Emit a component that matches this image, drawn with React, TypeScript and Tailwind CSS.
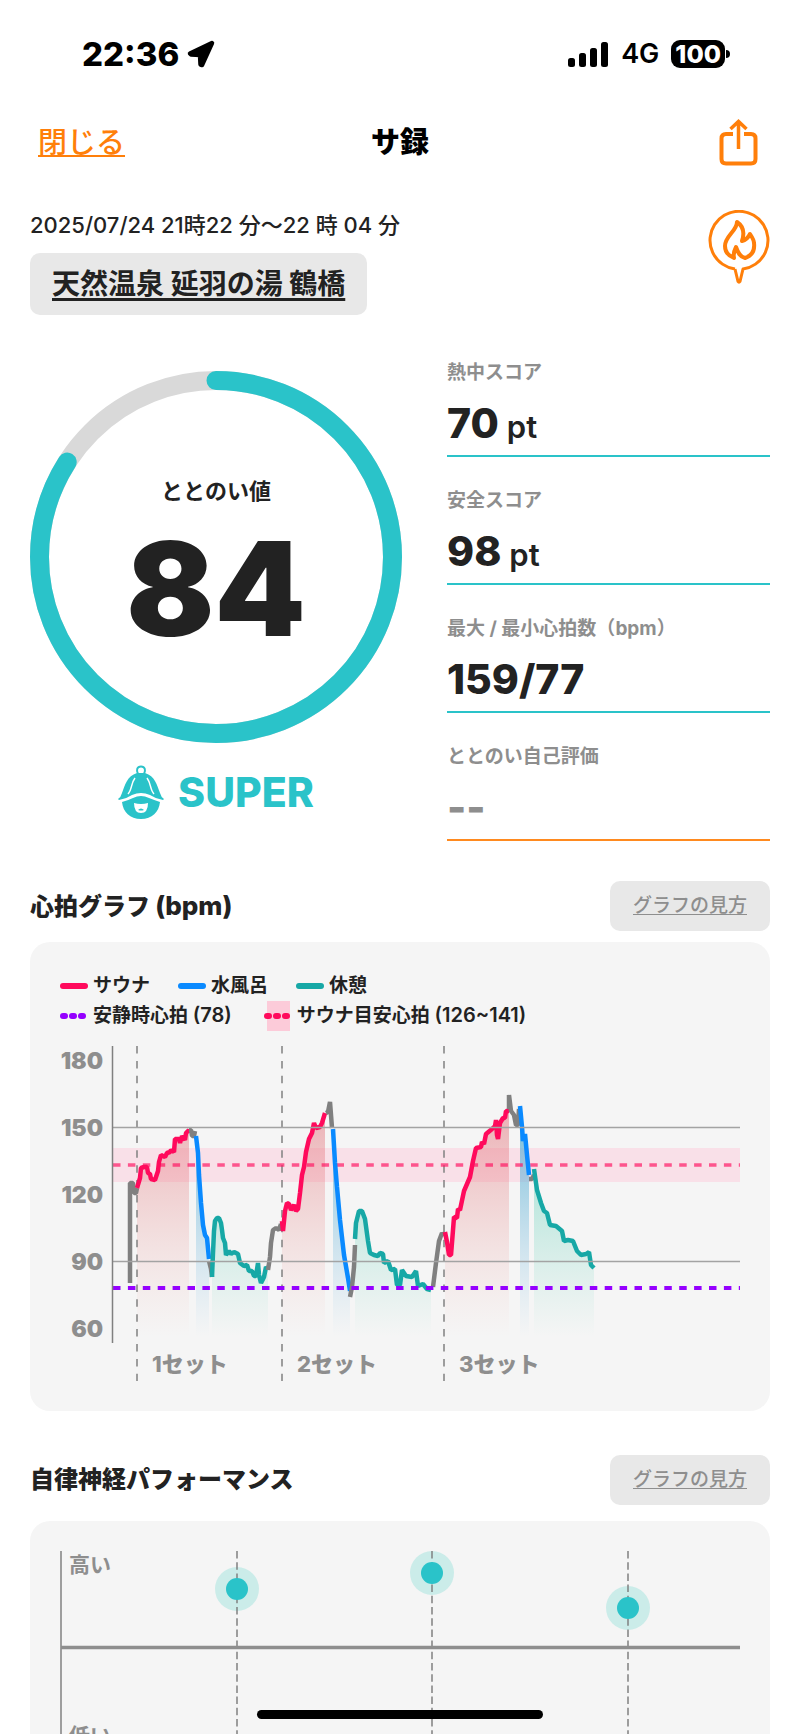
import type { ReactNode } from 'react';

const TEAL = '#2ac3c9';
const ORANGE = '#ff7f0a';
const RED = '#ff0a5c';
const BLUE = '#0a8aff';
const GREEN = '#17a8a6';
const GRAY = '#808080';

type Phase = 'sauna' | 'water' | 'rest' | 'move';

const phaseColor: Record<Phase, string> = { sauna: RED, water: BLUE, rest: GREEN, move: GRAY };

// heart rate trace, one entry per phase, in chart units
const trace: { phase: Phase; points: string }[] = [
    { phase: 'move', points: '70,248 70,148 73,148 74,158 76,158 77,153' },
    { phase: 'sauna', points: '77,153 80,143 81,133 84,132 87,132 88,138 90,139 91,144 95,145 98,136 99,127 101,120 105,122 107,118 110,117 111,115 114,117 115,104 119,104 120,108 122,101 125,105 126,98 129,95 129,98' },
    { phase: 'move', points: '129,95 131,95 132,101 134,101 135,96' },
    { phase: 'water', points: '136,101 138,118 139,140 141,168 143,190 145,200 147,203 149,224' },
    { phase: 'move', points: '149,226 151,234 152,242' },
    { phase: 'rest', points: '152,242 153,218 154,196 155,186 157,183 159,183 161,188 162,195 163,203 165,208 166,220 169,216 171,219 174,217 178,219 180,228 184,231 187,230 189,236 192,236 194,241 196,241 198,228 199,240 201,248 204,242 206,232 208,234' },
    { phase: 'move', points: '208,235 210,222 211,208 213,195 216,193 219,195 221,189' },
    { phase: 'sauna', points: '222,186 223,196 225,176 227,168 229,169 231,175 234,170 236,176 238,174 240,158 242,140 244,132 246,117 249,104 252,98 254,88 256,93 260,92 262,88 265,78' },
    { phase: 'move', points: '266,78 268,77 270,67 271,80 272,93' },
    { phase: 'water', points: '273,94 275,128 277,152 280,185 284,220 288,243 290,256' },
    { phase: 'move', points: '290,262 292,252 294,232 295,210' },
    { phase: 'rest', points: '295,204 296,188 299,176 302,176 305,184 308,206 310,218 314,220 318,221 320,218 323,219 324,228 328,226 331,235 335,234 337,250 340,250 342,235 346,241 352,242 356,236 358,251 363,249 367,254 371,255' },
    { phase: 'move', points: '373,252 376,228 379,206 382,198 384,201' },
    { phase: 'sauna', points: '385,197 387,207 389,220 391,220 393,195 394,182 397,183 398,174 400,175 404,156 410,142 413,126 416,113 421,112 422,107 424,109 426,99 432,94 435,91 436,85 437,100 438,104 440,88 443,83 445,83 446,76 449,76' },
    { phase: 'move', points: '449,74 449,60 451,76 454,80 456,90 458,90 459,74' },
    { phase: 'water', points: '460,71 462,92 463,106 465,99 467,120 469,140' },
    { phase: 'move', points: '469,144 472,144 474,140' },
    { phase: 'rest', points: '474,134 477,155 481,168 484,176 487,178 490,190 496,191 502,196 504,206 508,205 513,206 517,216 521,220 526,219 529,217 531,230 534,233' },
];

const ticks = [
    { label: '180', y: 22 },
    { label: '150', y: 89 },
    { label: '120', y: 156 },
    { label: '90', y: 223 },
    { label: '60', y: 290 },
];

const sets = [
    { label: '1セット', x: 77 },
    { label: '2セット', x: 222 },
    { label: '3セット', x: 384 },
];

const scores = [
    { label: '熱中スコア', value: '70', unit: 'pt', done: true },
    { label: '安全スコア', value: '98', unit: 'pt', done: true },
    { label: '最大 / 最小心拍数（bpm）', value: '159/77', unit: '', done: true },
    { label: 'ととのい自己評価', value: '--', unit: '', done: false },
];

function StatusBar()
{
    return (
        <div className="flex items-center justify-between pt-9 pl-[82px] pr-[70px] h-[72px] text-black">
            <div className="flex items-center gap-2">
                <span className="text-[33px] leading-9 font-extrabold">22:36</span>
                <svg className="w-7 h-7" viewBox="0 0 28 28" aria-hidden="true">
                    <path d="M25 3 L3 13.500 L4 14.500 L13 15 L13.500 24.500 L15 25 Z" stroke="#000" strokeWidth="4.500" strokeLinejoin="round" />
                </svg>
            </div>
            <div className="flex items-center gap-3">
                <svg className="w-[42px] h-7" viewBox="0 0 42 28" aria-hidden="true">
                    <rect x="1" y="18" width="7" height="9" rx="2.500" />
                    <rect x="12" y="13" width="7" height="14" rx="2.500" />
                    <rect x="23" y="8" width="7" height="19" rx="2.500" />
                    <rect x="34" y="2" width="7" height="25" rx="2.500" />
                </svg>
                <span className="text-[27px] leading-9 font-semibold">4G</span>
                <div className="flex items-center gap-px">
                    <span className="px-1 rounded-[9px] bg-black text-white text-[25px] leading-7 font-extrabold">100</span>
                    <span className="w-1 h-2 rounded-r-full bg-black" />
                </div>
            </div>
        </div>
    );
}

function ShareIcon()
{
    return (
        <svg className="w-11 h-12" viewBox="0 0 44 48" fill="none" stroke={ORANGE} strokeWidth="4" aria-hidden="true">
            <path d="M15 15 H8 Q3.500 15 3.500 19.500 V40 Q3.500 44.500 8 44.500 H33 Q37.500 44.500 37.500 40 V19.500 Q37.500 15 33 15 H26" />
            <path d="M20.500 30 V3 M12.500 10 L20.500 2.500 L28.500 10" strokeWidth="3.500" />
        </svg>
    );
}

function FirePin()
{
    return (
        <svg className="w-[62px] h-[74px] mt-px" viewBox="0 0 62 74" fill="none" stroke={ORANGE} strokeWidth="3" strokeLinejoin="round" aria-hidden="true">
            <path d="M27 59 A29 29 0 1 1 35 59 L32 71.500 Q31 73 30 71.500 Z" stroke="none" />
            <path d="M27 59 A29 29 0 1 1 35 59 L32 71.500 Q31 73 30 71.500 L27 59" />
            <path d="M29 12 C29 21 17 26 17 36 C17 42 21 46 26 48 C25 44 26 41 28 37 C30 43 32 47 37 48 C43 46 47 41 46 33 C46 30 44 27 42 24 C40 28 38 30 34 31 C37 22 35 16 29 12 Z" strokeWidth="4" />
        </svg>
    );
}

function SaunaHat()
{
    return (
        <svg className="w-[46px] h-[54px]" viewBox="0 0 46 54" fill={TEAL} aria-hidden="true">
            <path d="M20 9 C18 5 19 1.500 23 1.500 S28 5 26 9" fill="none" stroke={TEAL} strokeWidth="2" />
            <path d="M19 8 H27 C37 11 39 20 42 28 Q43 32 46 34 L45 35 Q38 34 32 30 Q23 26 14 30 Q8 34 1 35 L0 34 Q3 32 4 28 C7 20 9 11 19 8 Z" />
            <path d="M4 37 Q11 35 15 33 Q23 29 31 33 Q36 35 42 37 C41 47 34 54 23 54 S5 47 4 37 Z" />
            <path d="M17 13 C13 18 14 25 10 29 M29 13 C33 18 32 25 36 29" fill="none" stroke="#fff" strokeWidth="1.500" />
            <path d="M16 38 Q23 40 30 38 Q30 48 23 48 T16 38 Z" fill="#fff" />
            <path d="M20 45 Q23 42 26 45 Q23 46 20 45 Z" />
        </svg>
    );
}

function ScoreRing()
{
    const r = 176.5;
    const total = 2 * Math.PI * r;
    return (
        <div className="relative">
            <svg className="block w-full" viewBox="0 0 372 372" fill="none" strokeWidth="19" aria-hidden="true">
                <circle cx="186" cy="186" r={r} stroke="#d9d9d9" />
                <circle cx="186" cy="186" r={r} stroke={TEAL} strokeLinecap="round" strokeDasharray={`${total * 0.84} ${total}`} transform="rotate(-90 186 186)" />
            </svg>
            <div className="absolute inset-0 flex flex-col items-center justify-center pt-8 text-[#222]">
                <p className="text-[22px] leading-8 font-bold">ととのい値</p>
                <p className="text-[130px] leading-[164px] font-black">84</p>
            </div>
        </div>
    );
}

function SectionHeader({ children }: { children: ReactNode })
{
    return (
        <div className="flex items-center justify-between">
            <h2 className="text-2xl font-extrabold">{children}</h2>
            <button type="button" className="h-[50px] w-40 rounded-[10px] bg-[#e8e8e8] text-[#8e8e8e] text-[19px] font-medium underline underline-offset-2 [text-decoration-skip-ink:none]">
                グラフの見方
            </button>
        </div>
    );
}

function LegendLine({ color, children }: { color: string; children: ReactNode })
{
    return (
        <li className="flex items-center gap-[5px]">
            <svg className="w-7 h-[6px]" viewBox="0 0 28 6" aria-hidden="true">
                <rect width="28" height="6" rx="3" fill={color} />
            </svg>
            {children}
        </li>
    );
}

function LegendDots({ color, band, children }: { color: string; band?: boolean; children: ReactNode })
{
    return (
        <li className="flex items-center gap-[5px]">
            <svg className="w-7 h-[30px]" viewBox="0 0 28 30" aria-hidden="true">
                {band && <rect x="3" width="23" height="30" fill="#fccbd9" />}
                <path d="M3 15 h2 M12 15 h2 M21 15 h2" stroke={color} strokeWidth="6" strokeLinecap="round" />
            </svg>
            <span>{children}</span>
        </li>
    );
}

function HeartRateChart()
{
    return (
        <svg className="block w-full" viewBox="0 0 680 342" role="img" aria-label="心拍グラフ">
            <defs>
                <linearGradient id="sauna" gradientUnits="userSpaceOnUse" x1="0" y1="80" x2="0" y2="302">
                    <stop offset="0" stopColor="#e0606a" stopOpacity="0.45" />
                    <stop offset="1" stopColor="#f0a8a0" stopOpacity="0" />
                </linearGradient>
                <linearGradient id="water" gradientUnits="userSpaceOnUse" x1="0" y1="80" x2="0" y2="302">
                    <stop offset="0" stopColor="#4aa9cf" stopOpacity="0.75" />
                    <stop offset="1" stopColor="#8fc6e8" stopOpacity="0" />
                </linearGradient>
                <linearGradient id="rest" gradientUnits="userSpaceOnUse" x1="0" y1="110" x2="0" y2="302">
                    <stop offset="0" stopColor="#7fd8c6" stopOpacity="0.7" />
                    <stop offset="1" stopColor="#a0e0d0" stopOpacity="0" />
                </linearGradient>
            </defs>

            <rect x="53" y="109" width="627" height="34" fill="#f9e0e8" />

            <g transform="translate(0 -4)">
                {trace.filter((t) => t.phase !== 'move').map((t) => {
                    const pts = t.points.split(' ');
                    const first = pts[0].split(',')[0];
                    const last = pts[pts.length - 1].split(',')[0];
                    return <polygon key={t.points} points={`${first},302 ${t.points} ${last},302`} fill={`url(#${t.phase})`} />;
                })}
            </g>

            <g stroke={GRAY} strokeWidth="1.500" strokeDasharray="7.500 7.400">
                {sets.map((s) => <path key={s.x} d={`M${s.x} 7 V342`} />)}
            </g>
            <path d="M53 126 H680" stroke={RED} strokeOpacity="0.65" strokeWidth="3.500" strokeDasharray="7.500 7.400" />

            <g fill="none" strokeWidth="4.500" strokeLinejoin="bevel" transform="translate(0 -4)">
                {trace.map((t) => <polyline key={t.points} points={t.points} stroke={phaseColor[t.phase]} />)}
            </g>

            <path d="M53 88.500 H680 M53 222.500 H680" stroke="#a3a3a3" strokeWidth="1.500" />
            <path d="M53 249 H680" stroke="#9500ff" strokeWidth="4" strokeDasharray="7.500 7.400" />
            <path d="M52.500 7 V304" stroke={GRAY} strokeWidth="1.500" />

            <g className="text-[23px] font-black" fill="#8e8e8e">
                {ticks.map((t) => <text key={t.label} x="43" y={t.y + 8} textAnchor="end">{t.label}</text>)}
            </g>
            <g className="text-[22px] font-extrabold" fill="#8e8e8e">
                {sets.map((s) => <text key={s.label} x={s.x + 15} y="333">{s.label}</text>)}
            </g>
        </svg>
    );
}

function NerveChart()
{
    const dots = [{ x: 177, y: 38 }, { x: 372, y: 22 }, { x: 568, y: 57 }];
    return (
        <svg className="block w-full" viewBox="0 0 680 200" role="img" aria-label="自律神経パフォーマンス">
            {dots.map((d) => <circle key={d.x} cx={d.x} cy={d.y} r="22" fill="#cbece9" />)}
            <g stroke={GRAY} strokeWidth="1.500" strokeDasharray="7.500 3.700">
                {dots.map((d) => <path key={d.x} d={`M${d.x} 0 V200`} />)}
            </g>
            {dots.map((d) => <circle key={d.x} cx={d.x} cy={d.y} r="11" fill={TEAL} />)}
            <path d="M1 0 V200" stroke={GRAY} strokeWidth="1.500" />
            <path d="M1 96.500 H680" stroke="#8e8e8e" strokeWidth="3.500" />
            <g className="text-[21px] font-bold" fill="#8e8e8e">
                <text x="9" y="21">高い</text>
                <text x="9" y="192">低い</text>
            </g>
        </svg>
    );
}

export default function App()
{
    return (
        <div className="relative h-screen overflow-hidden bg-white text-[#222] font-['Inter','Noto_Sans_CJK_JP',sans-serif]">
            <StatusBar />

            <header className="grid grid-cols-3 items-center px-[38px] pt-[47px]">
                <a href="#close" className="justify-self-start text-[29px] leading-[44px] font-medium text-[#ff7f0a] underline underline-offset-2 decoration-2 [text-decoration-skip-ink:none]">閉じる</a>
                <h1 className="text-center text-[29px] leading-[44px] font-extrabold text-black">サ録</h1>
                <button type="button" aria-label="共有" className="justify-self-end">
                    <ShareIcon />
                </button>
            </header>

            <main className="px-[30px]">
                <section className="flex items-start justify-between pt-[42px]">
                    <div>
                        <p className="text-[22px] leading-8 font-medium">2025/07/24 21時22 分～22 時 04 分</p>
                        <a href="#place" className="inline-block mt-3 px-[22px] py-[9px] rounded-[10px] bg-[#e8e8e8] text-[28px] leading-[44px] font-bold underline underline-offset-4 decoration-3 [text-decoration-skip-ink:none]">
                            天然温泉 延羽の湯 鶴橋
                        </a>
                    </div>
                    <FirePin />
                </section>

                <section className="grid grid-cols-[372fr_323fr] gap-x-[45px] pt-10">
                    <div className="pt-4">
                        <ScoreRing />
                        <div className="flex items-center justify-center gap-[14px] mt-[22px]">
                            <SaunaHat />
                            <span className="text-[41px] leading-[54px] font-extrabold text-[#2ac3c9]">SUPER</span>
                        </div>
                    </div>
                    <dl className="flex flex-col gap-[26px]">
                        {scores.map((s) => (
                            <div key={s.label} className={`h-[102px] border-b-2 ${s.done ? 'border-[#2ac3c9]' : 'border-[#ff8a1f]'}`}>
                                <dt className="pt-0.5 text-[19px] leading-8 font-bold text-[#8e8e8e]">{s.label}</dt>
                                <dd className={`flex items-baseline gap-2 mt-2 text-[41px] leading-[52px] font-extrabold ${s.done ? '' : 'text-[#8e8e8e]'}`}>
                                    {s.value}
                                    {s.unit && <span className="text-[31px] font-semibold">{s.unit}</span>}
                                </dd>
                            </div>
                        ))}
                    </dl>
                </section>

                <section className="pt-10">
                    <SectionHeader>心拍グラフ <span className="text-[26px]">(bpm)</span></SectionHeader>
                    <div className="mt-[11px] px-[30px] pt-[29px] pb-[30px] rounded-[20px] bg-[#f5f5f5]">
                        <ul className="flex gap-7 text-[19px] leading-[30px] font-semibold">
                            <LegendLine color={RED}>サウナ</LegendLine>
                            <LegendLine color={BLUE}>水風呂</LegendLine>
                            <LegendLine color={GREEN}>休憩</LegendLine>
                        </ul>
                        <ul className="flex gap-8 text-[19px] leading-[30px] font-semibold">
                            <LegendDots color="#9500ff">安静時心拍 <span className="text-xl leading-none">(78)</span></LegendDots>
                            <LegendDots color={RED} band>サウナ目安心拍 <span className="text-xl leading-none">(126~141)</span></LegendDots>
                        </ul>
                        <div className="mt-2">
                            <HeartRateChart />
                        </div>
                    </div>
                </section>

                <section className="pt-11">
                    <SectionHeader>自律神経パフォーマンス</SectionHeader>
                    <div className="mt-4 px-[30px] py-[30px] rounded-[20px] bg-[#f5f5f5]">
                        <NerveChart />
                    </div>
                </section>
            </main>

            <div className="absolute bottom-[15px] left-1/2 -translate-x-1/2 w-[286px] h-[9px] rounded-full bg-black" />
        </div>
    );
}
